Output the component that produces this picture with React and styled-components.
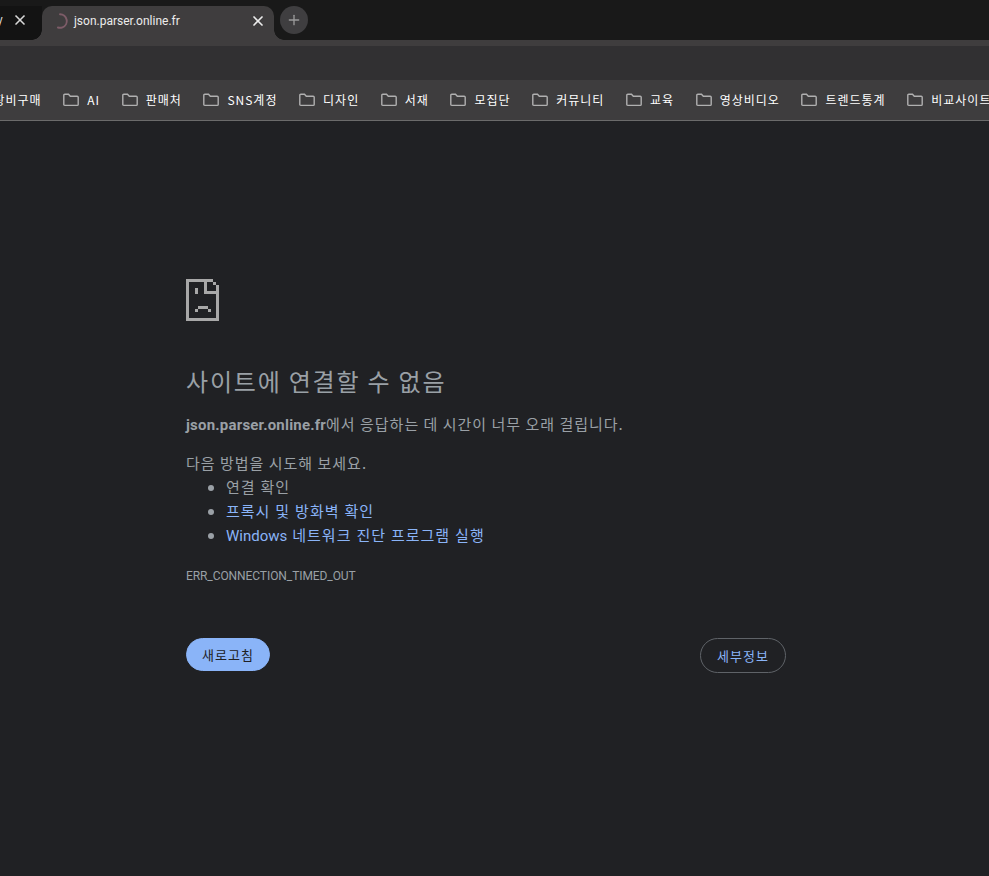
import React from 'react';
import styled, { createGlobalStyle } from 'styled-components';
import { X, Plus } from 'lucide-react';

const KR = `"Noto Sans CJK KR", "Noto Sans", sans-serif`;
const LATIN = `Roboto, "Noto Sans CJK KR", sans-serif`;
const TAB = '#3f3d3e';

const GlobalStyle = createGlobalStyle`
  html, body {
    margin: 0;
    padding: 0;
    height: 100%;
    background: #202124;
  }
  body {
    font-family: ${KR};
    overflow: hidden;
  }
`;

const Window = styled.div`
  width: 989px;
  height: 876px;
  display: flex;
  flex-direction: column;
  overflow: hidden;
`;

const TabStrip = styled.div`
  height: 46px;
  box-sizing: border-box;
  padding-top: 6px;
  display: flex;
  align-items: flex-start;
  background: linear-gradient(#191919 40px, ${TAB} 40px);
`;

const PrevTab = styled.div`
  width: 42px;
  height: 34px;
  box-sizing: border-box;
  padding: 0 14px 6px 0;
  display: flex;
  align-items: center;
  justify-content: space-between;
  background: #131313;
  border-bottom-right-radius: 10px;
  color: #d8d8d8;
  overflow: hidden;
`;

const PrevTitle = styled.span`
  margin-left: -3px;
  font: 12px ${LATIN};
`;

const ActiveTab = styled.div`
  position: relative;
  width: 232px;
  height: 40px;
  box-sizing: border-box;
  padding: 0 8px 11px 10px;
  display: flex;
  align-items: center;
  background: ${TAB};
  border-radius: 10px 10px 0 0;
  color: #ececec;

  &::before, &::after {
    content: '';
    position: absolute;
    bottom: 6px;
    width: 10px;
    height: 10px;
  }
  &::before {
    left: -10px;
    background: radial-gradient(circle at 0 0, transparent 9.5px, ${TAB} 10px);
  }
  &::after {
    right: -10px;
    background: radial-gradient(circle at 100% 0, transparent 9.5px, ${TAB} 10px);
  }
`;

const TabTitle = styled.span`
  flex: 1;
  margin-left: 6px;
  font: 12px ${LATIN};
`;

const NewTab = styled.div`
  position: relative;
  z-index: 1;
  width: 28px;
  height: 28px;
  margin-left: 6px;
  border-radius: 50%;
  display: flex;
  align-items: center;
  justify-content: center;
  background: #3f3e40;
  color: #9b9b9b;
`;

const Toolbar = styled.div`
  height: 34px;
  background: #313032;
`;

const BookmarkBar = styled.div`
  height: 40px;
  box-sizing: border-box;
  padding-bottom: 1px;
  display: flex;
  align-items: center;
  background: #3e3d3e;
  overflow: hidden;
`;

const BarLine = styled.div`
  height: 1px;
  background: #6b6b6b;
`;

const BookmarkRow = styled.div`
  display: flex;
  align-items: center;
  gap: 21.6px;
  margin-left: -6.5px;
  white-space: nowrap;
`;

const Bookmark = styled.div`
  display: flex;
  align-items: center;
  gap: 8px;
  font-size: 12px;
  letter-spacing: 1px;
  color: #ffffff;
`;

const Page = styled.main`
  flex: 1;
  padding: 158px 0 0 186px;
  background: #202124;
  color: #9aa0a6;
`;

const Wrapper = styled.div`
  width: 600px;
`;

const Title = styled.h1`
  margin: 37px 0 0;
  font-size: 24px;
  font-weight: 400;
  line-height: 36px;
  letter-spacing: 1.8px;
`;

const Summary = styled.p`
  margin: ${p => (p.$lead ? 14 : 13)}px 0 0;
  font-size: 15px;
  line-height: 24px;
  letter-spacing: 1px;
`;

const Host = styled.strong`
  font-family: ${LATIN};
  font-weight: 700;
  letter-spacing: 0.2px;
`;

const Suggestions = styled.ul`
  margin: 0;
  padding-left: 40px;
  font-size: 15px;
  line-height: 24px;
  letter-spacing: 1px;
  word-spacing: 0.6px;
`;

const Link = styled.span`
  color: #8ab4f8;
`;

const LatinWord = styled.span`
  font-family: ${LATIN};
  letter-spacing: 0;
`;

const ErrorCode = styled.div`
  margin-top: 18px;
  font: 12px/20px ${LATIN};
  letter-spacing: -0.08px;
`;

const Buttons = styled.div`
  margin-top: 52px;
  display: flex;
  align-items: flex-start;
  justify-content: space-between;
`;

const Button = styled.button`
  box-sizing: border-box;
  height: ${p => (p.$primary ? 33 : 35)}px;
  width: ${p => (p.$primary ? 84 : 86)}px;
  padding: 0;
  border-radius: 18px;
  border: 1px solid ${p => (p.$primary ? '#8ab4f8' : '#5f6368')};
  background: ${p => (p.$primary ? '#8ab4f8' : 'transparent')};
  color: ${p => (p.$primary ? '#202124' : '#8ab4f8')};
  font: 13px ${KR};
  letter-spacing: 1px;
`;

const BOOKMARKS = ['장비구매', 'AI', '판매처', 'SNS계정', '디자인', '서재', '모집단', '커뮤니티', '교육', '영상비디오', '트렌드통계', '비교사이트'];

const FolderIcon = () => (
  <svg width="16" height="16" viewBox="0 0 16 16" fill="none" stroke="#b0b0b0" strokeWidth="1.4">
    <path d="M.8 3.2c0-.6.4-1 1-1h3.7l1.8 2h6.9c.6 0 1 .4 1 1v7.2c0 .6-.4 1-1 1H1.8c-.6 0-1-.4-1-1z" />
  </svg>
);

const Spinner = () => (
  <svg width="16" height="16" viewBox="0 0 16 16" fill="none" stroke="#7d5c68" strokeWidth="1.9" strokeLinecap="round">
    <path d="M8 1.2a6.8 6.8 0 0 1 2.5 13.1 6.8 6.8 0 0 1-4.6.2" />
  </svg>
);

const SadTab = () => (
  <svg width="33" height="42" viewBox="0 0 33 42" fill="#a8a8a8" shapeRendering="crispEdges">
    <path d="M0 0h27v3h-27zM0 0h3v42h-3zM0 39h33v3h-33zM30 6h3v36h-3zM27 3h3v3h-3zM18 0h3v15h-3zM18 12h15v3h-15z" />
    <path d="M9 9h3v6h-3zM12 27h10v3h-10zM9 30h3v3h-3zM22 30h3v3h-3z" />
  </svg>
);

export default function App() {
  return (
    <>
      <GlobalStyle />
      <Window>
        <TabStrip>
          <PrevTab><PrevTitle>y</PrevTitle><X size={16} strokeWidth={2.5} /></PrevTab>
          <ActiveTab>
            <Spinner />
            <TabTitle>json.parser.online.fr</TabTitle>
            <X size={16} strokeWidth={2.5} />
          </ActiveTab>
          <NewTab><Plus size={16} strokeWidth={2} /></NewTab>
        </TabStrip>
        <Toolbar />
        <BookmarkBar>
          <BookmarkRow>
            {BOOKMARKS.map((name, i) => (
              <Bookmark key={name}>
                {i > 0 && <FolderIcon />}
                {name}
              </Bookmark>
            ))}
          </BookmarkRow>
        </BookmarkBar>
        <BarLine />
        <Page>
          <Wrapper>
            <SadTab />
            <Title>사이트에 연결할 수 없음</Title>
            <Summary><Host>json.parser.online.fr</Host>에서 응답하는 데 시간이 너무 오래 걸립니다.</Summary>
            <Summary $lead>다음 방법을 시도해 보세요.</Summary>
            <Suggestions>
              <li>연결 확인</li>
              <li><Link>프록시 및 방화벽 확인</Link></li>
              <li><Link><LatinWord>Windows</LatinWord> 네트워크 진단 프로그램 실행</Link></li>
            </Suggestions>
            <ErrorCode>ERR_CONNECTION_TIMED_OUT</ErrorCode>
            <Buttons>
              <Button $primary>새로고침</Button>
              <Button>세부정보</Button>
            </Buttons>
          </Wrapper>
        </Page>
      </Window>
    </>
  );
}
